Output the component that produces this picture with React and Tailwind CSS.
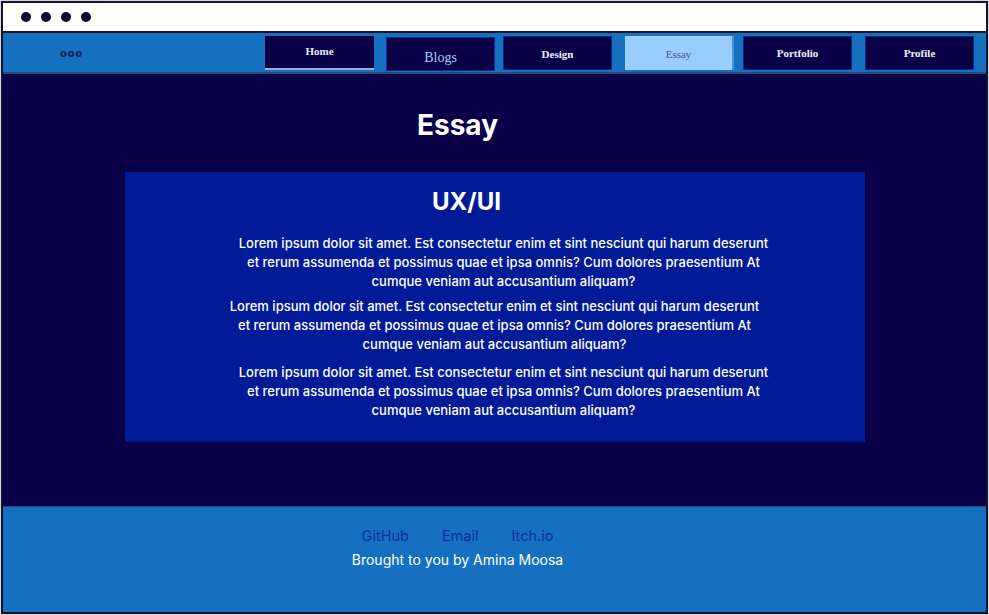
import React from 'react';

const navItems = [
  { label: 'Home', ml: 'ml-0', cls: 'bg-[#0a0048] text-[#e8eaff] text-[11px] font-bold pb-[2px] border-b-2 border-b-[#8fb0e0]' },
  { label: 'Blogs', ml: 'ml-[12px]', cls: 'bg-[#0a0048] text-[#a8c8ff] text-[14px] pt-[7px] border border-[#12308a] mt-[1px]' },
  { label: 'Design', ml: 'ml-[8px]', cls: 'bg-[#0a0048] text-[#f0f0ff] text-[11px] font-bold pt-[2px] border border-[#0c2a80]' },
  { label: 'Essay', ml: 'ml-[13px]', cls: 'bg-[#99ccff] text-[#4a4e9a] text-[11px] pt-[2px] border-r-2 border-r-[#4a90d8]' },
  { label: 'Portfolio', ml: 'ml-[9px]', cls: 'bg-[#0a0048] text-[#f0f0ff] text-[11px] font-bold border border-[#0c2a80]' },
  { label: 'Profile', ml: 'ml-[13px]', cls: 'bg-[#0a0048] text-[#f0f0ff] text-[11px] font-bold border border-[#0c2a80]' },
];

const lorem =
  'Lorem ipsum dolor sit amet. Est consectetur enim et sint nesciunt qui harum deserunt et rerum assumenda et possimus quae et ipsa omnis? Cum dolores praesentium At cumque veniam aut accusantium aliquam?';

export default function App() {
  return (
    <div className="w-[989px] h-[615px] p-px bg-[#d8d8e0] font-['Inter',sans-serif]">
      <div className="h-full flex flex-col border-2 border-[#14142e] bg-[#0a0048]">
        {/* window chrome */}
        <div className="h-[30px] bg-white border-b-2 border-[#14142e] flex items-center gap-[10px] pl-[18px]">
          <span className="w-[10px] h-[10px] rounded-full bg-[#0a0a30]" />
          <span className="w-[10px] h-[10px] rounded-full bg-[#0a0a30]" />
          <span className="w-[10px] h-[10px] rounded-full bg-[#0a0a30]" />
          <span className="w-[10px] h-[10px] rounded-full bg-[#0a0a30]" />
        </div>

        {/* nav */}
        <nav className="h-[41px] bg-[#1570c0] border-b-2 border-[#2a4a78] flex items-start pt-[3px]">
          <div className="w-[262px] flex justify-start pl-[57px] pt-[12px]">
            <span className="text-[11px] font-bold tracking-[1px] text-[#0a1a40] leading-none">ooo</span>
          </div>
          <div className="flex font-['Liberation_Serif',serif]">
            {navItems.map((it) => (
              <div
                key={it.label}
                className={`w-[109px] h-[34px] flex items-center justify-center ${it.ml} ${it.cls}`}
              >
                {it.label}
              </div>
            ))}
          </div>
        </nav>

        {/* main */}
        <main className="flex-1 bg-[#0a0048] flex flex-col items-center">
          <div className="w-[909px] self-start text-center pt-[33px] pb-[29px]">
            <h1 className="text-white font-bold text-[28px] leading-[36px]">Essay</h1>
          </div>
          <section className="w-[740px] bg-[#001a98] pt-[15px] pb-[22px] text-white">
            <h2 className="text-center font-bold text-[24px] leading-[30px] pr-[56px]">UX/UI</h2>
            <div className="mt-[17px] text-[13px] leading-[19px] font-medium text-center">
              <p className="w-[540px] mx-auto pl-[18px] box-content">{lorem}</p>
              <p className="w-[540px] mx-auto mt-[6px]">{lorem}</p>
              <p className="w-[540px] mx-auto mt-[9px] pl-[18px] box-content">{lorem}</p>
            </div>
          </section>
        </main>

        {/* footer */}
        <footer className="h-[106px] bg-[#1570c0] border-t border-[#1c4f86]">
          <div className="w-[909px] flex flex-col items-center pt-[19px]">
            <div className="flex gap-[33px] text-[14.5px] leading-[20px] text-[#0b2a9e]">
              <span>GitHub</span>
              <span>Email</span>
              <span>Itch.io</span>
            </div>
            <p className="mt-[4px] text-white text-[14px] leading-[20px]">Brought to you by Amina Moosa</p>
          </div>
        </footer>
      </div>
    </div>
  );
}
